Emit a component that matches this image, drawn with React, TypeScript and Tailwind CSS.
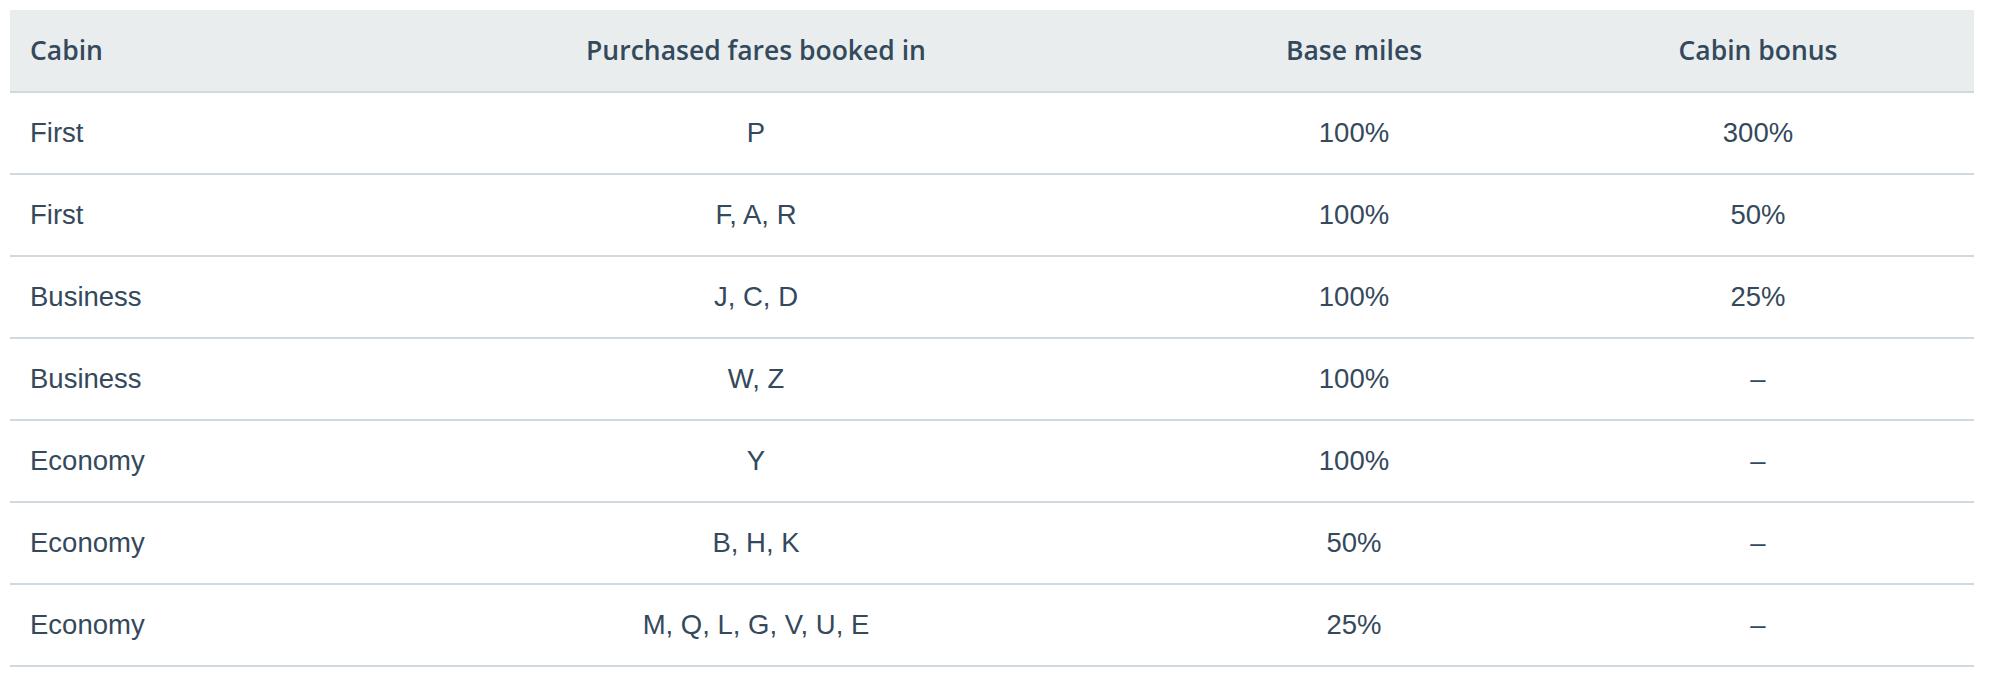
import React from "react";

const rows: [string, string, string, string][] = [
  ["First", "P", "100%", "300%"],
  ["First", "F, A, R", "100%", "50%"],
  ["Business", "J, C, D", "100%", "25%"],
  ["Business", "W, Z", "100%", "–"],
  ["Economy", "Y", "100%", "–"],
  ["Economy", "B, H, K", "50%", "–"],
  ["Economy", "M, Q, L, G, V, U, E", "25%", "–"],
];

export default function App() {
  return (
    <div className="bg-white w-[1990px] h-[676px] pt-[10px] pl-[10px]">
      <table className="w-[1964px] table-fixed border-collapse text-[#34495c]">
        <colgroup>
          <col className="w-[336px]" />
          <col className="w-[820px]" />
          <col className="w-[376px]" />
          <col className="w-[432px]" />
        </colgroup>
        <thead>
          <tr className="bg-[#e9edee] h-[82px] border-b-2 border-[#d1d9e0] text-[26.5px] font-semibold" style={{ fontFamily: '"Open Sans", sans-serif' }}>
            <th className="text-left pl-[20px] font-semibold">Cabin</th>
            <th className="text-center font-semibold">Purchased fares booked in</th>
            <th className="text-center font-semibold">Base miles</th>
            <th className="text-center font-semibold">Cabin bonus</th>
          </tr>
        </thead>
        <tbody className="text-[27.5px]" style={{ fontFamily: '"Liberation Sans", Arial, sans-serif' }}>
          {rows.map((r, i) => (
            <tr key={i} className="h-[82px] border-b-2 border-[#d1d9e0]">
              <td className="text-left pl-[20px]">{r[0]}</td>
              <td className="text-center">{r[1]}</td>
              <td className="text-center">{r[2]}</td>
              <td className="text-center">{r[3]}</td>
            </tr>
          ))}
        </tbody>
      </table>
    </div>
  );
}
